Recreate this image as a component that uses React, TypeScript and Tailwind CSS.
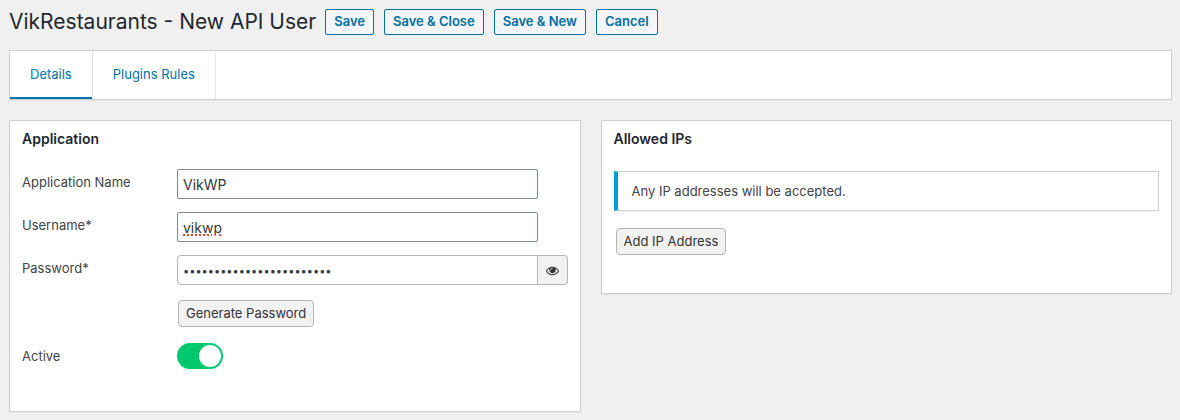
import React, { useState } from 'react';

const actions = ['Save', 'Save & Close', 'Save & New', 'Cancel'];
const tabs = ['Details', 'Plugins Rules'];

const EyeIcon: React.FC = () => (
  <svg viewBox="0 0 1792 1792" className="w-[13px] h-[13px]" fill="currentColor" aria-hidden="true">
    <path d="M1664 960q-152-236-381-353 61 104 61 225 0 185-131.5 316.5t-316.5 131.5-316.5-131.5-131.5-316.5q0-121 61-225-229 117-381 353 133 205 333.5 326.5t434.5 121.5 434.5-121.5 333.5-326.5zm-720-384q0-20-14-34t-34-14q-125 0-214.5 89.5t-89.5 214.5q0 20 14 34t34 14 34-14 14-34q0-86 61-147t147-61q20 0 34-14t14-34zm848 384q0 34-20 69-140 230-376.5 368.5t-499.5 138.5-499.5-139-376.5-368q-20-35-20-69t20-69q140-229 376.5-368t499.5-139 499.5 139 376.5 368q20 35 20 69z" />
  </svg>
);

const Panel: React.FC<{ title: string; children: React.ReactNode }> = ({ title, children }) => (
  <section className="flex-1 min-w-0 bg-white border border-[#ccd0d4] shadow-[0_1px_1px_rgba(0,0,0,0.04)] px-3 pt-2 pb-[38px]">
    <h2 className="text-[14px] leading-5 font-semibold text-[#23282d]">{title}</h2>
    {children}
  </section>
);

const Row: React.FC<{ label: string; htmlFor: string; children: React.ReactNode }> = ({ label, htmlFor, children }) => (
  <div className="flex items-start">
    <label htmlFor={htmlFor} className="w-[155px] shrink-0 pt-[3px] leading-5">{label}</label>
    {children}
  </div>
);

const App: React.FC = () => {
  const [tab, setTab] = useState('Details');
  const [visible, setVisible] = useState(false);

  return (
    <div className="min-h-screen bg-[#f0f0f0] pl-[9px] pr-2 pt-[9px] pb-2 font-['Inter',sans-serif] text-[13px] text-[#444]">
      {/* Page heading and toolbar */}
      <header className="flex flex-wrap items-center gap-[9px]">
        <h1 className="text-[21px] leading-[26px] text-[#23282d]">VikRestaurants - New API User</h1>
        <div className="flex flex-wrap gap-[10px]">
          {actions.map((action) => (
            <button
              key={action}
              type="button"
              className="h-[26px] px-2 rounded-[2px] border border-[#0071a1] bg-[#f3f5f6] font-semibold text-[#0071a1]"
            >
              {action}
            </button>
          ))}
        </div>
      </header>

      {/* Tabs */}
      <nav className="mt-[15px] flex bg-white border border-[#ccd0d4] shadow-[0_1px_1px_rgba(0,0,0,0.04)]">
        {tabs.map((name) => (
          <button
            key={name}
            type="button"
            onClick={() => setTab(name)}
            className="h-12 border-r border-[#e5e5e5] text-[#0073aa]"
          >
            <span
              className={
                'flex h-full items-center px-5 ' +
                (tab === name ? 'shadow-[inset_0_-2px_0_#0073aa]' : '')
              }
            >
              {name}
            </span>
          </button>
        ))}
      </nav>

      <div className="mt-5 flex items-start gap-5">
        <Panel title="Application">
          <div className="mt-5 flex flex-col gap-[13px]">
            <Row label="Application Name" htmlFor="application">
              <input
                id="application"
                type="text"
                defaultValue="VikWP"
                className="flex-1 min-w-0 h-[30px] mr-[30px] px-[5px] rounded-[2px] border border-[#7e8993] bg-white text-[14px] text-[#32373c]"
              />
            </Row>
            <Row label="Username*" htmlFor="username">
              <input
                id="username"
                type="text"
                defaultValue="vikwp"
                className="flex-1 min-w-0 h-[30px] mr-[30px] px-[5px] rounded-[2px] border border-[#7e8993] bg-white text-[14px] text-[#32373c] underline decoration-dotted decoration-[#ff3b30] decoration-2 underline-offset-2"
              />
            </Row>
            <Row label="Password*" htmlFor="password">
              <div className="flex flex-1 min-w-0">
                <input
                  id="password"
                  type={visible ? 'text' : 'password'}
                  defaultValue="a7Kd93mQx0LpZr52TbWn8VcY"
                  className="flex-1 min-w-0 h-[30px] px-[5px] pt-[2px] rounded-l-[4px] border border-[#b4b4b4] bg-white text-[11px] text-[#32373c]"
                />
                <button
                  type="button"
                  aria-label="Show password"
                  onClick={() => setVisible(!visible)}
                  className="flex w-[30px] h-[30px] items-center justify-center rounded-r-[4px] border border-l-0 border-[#b4b4b4] bg-[#f2f2f2] text-[#333]"
                >
                  <EyeIcon />
                </button>
              </div>
            </Row>
          </div>
          <button
            type="button"
            className="mt-[15px] ml-[156px] block h-[27px] px-[7px] rounded-[4px] border border-[#b4b4b4] bg-[#f2f2f2] text-[#333]"
          >
            Generate Password
          </button>
          <div className="mt-4 mb-1">
            <Row label="Active" htmlFor="active">
              <input
                id="active"
                type="checkbox"
                role="switch"
                defaultChecked
                className="flex w-[46px] h-[26px] appearance-none items-center rounded-full bg-[#ccc] p-[2px] checked:justify-end checked:bg-[#00c96d] before:block before:size-[22px] before:rounded-full before:bg-white"
              />
            </Row>
          </div>
        </Panel>

        <Panel title="Allowed IPs">
          <p className="mt-[22px] border border-l-4 border-[#ccd0d4] border-l-[#00a0d2] py-[9px] px-[14px] leading-5 shadow-[0_1px_1px_rgba(0,0,0,0.04)]">
            Any IP addresses will be accepted.
          </p>
          <button
            type="button"
            className="mt-[17px] ml-[2px] block h-[27px] px-[7px] rounded-[4px] border border-[#b4b4b4] bg-[#f2f2f2] text-[#333]"
          >
            Add IP Address
          </button>
        </Panel>
      </div>
    </div>
  );
};

export default App;
